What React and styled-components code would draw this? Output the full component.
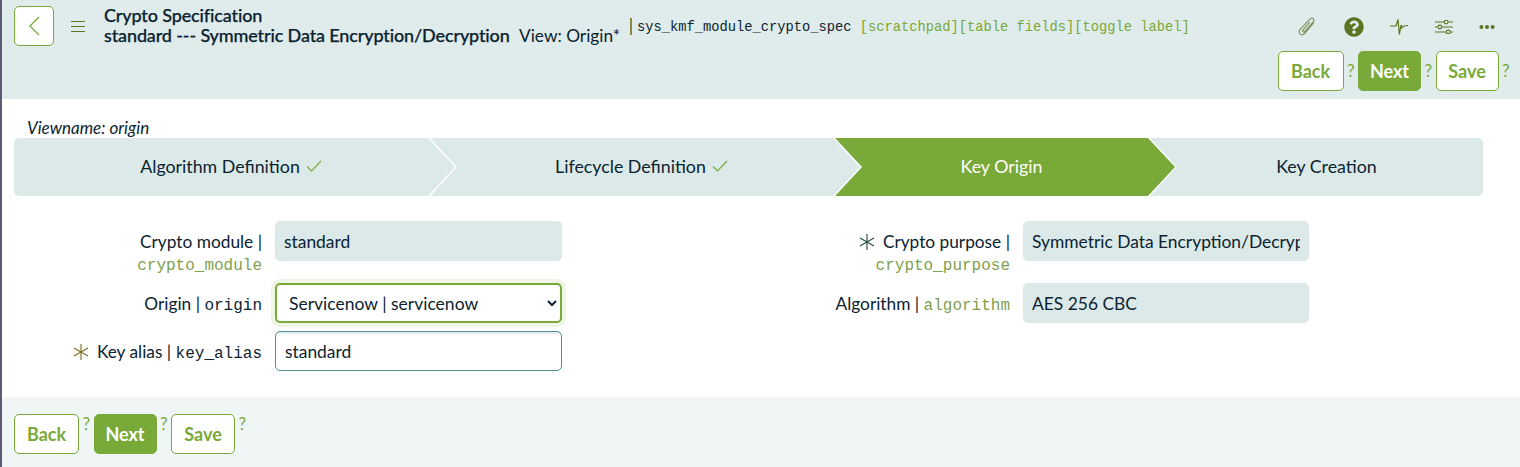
import React from "react";
import styled, { createGlobalStyle } from "styled-components";
import { FaQuestionCircle } from "react-icons/fa";

const sans = `Lato, "Open Sans", sans-serif`;
const mono = `"Liberation Mono", monospace`;
const green = "#79a938";
const darkGreen = "#5a7420";
const ink = "#0b2330";

const GlobalStyle = createGlobalStyle`
  html, body {
    margin: 0;
    padding: 0;
    background: #fff;
    color: ${ink};
    font-family: ${sans};
  }
  * { box-sizing: border-box; }
`;

const leftFields = [
  { label: "Crypto module", name: "crypto_module", value: "standard", wrap: true, tint: true },
  { label: "Origin", name: "origin", select: true, dark: true },
  { label: "Key alias", name: "key_alias", value: "standard", required: "#7d6a22", dark: true },
];

const rightFields = [
  {
    label: "Crypto purpose",
    name: "crypto_purpose",
    value: "Symmetric Data Encryption/Decryption",
    wrap: true,
    tint: true,
    required: "#1f4d3a",
  },
  { label: "Algorithm", name: "algorithm", value: "AES 256 CBC", tint: true },
];

const steps = [
  { label: "Algorithm Definition", done: true, width: 441 },
  { label: "Lifecycle Definition", done: true, width: 430 },
  { label: "Key Origin", active: true, width: 340 },
  { label: "Key Creation", last: true, width: 333 },
];

const PaperclipIcon = () => (
  <svg width="20" height="20" viewBox="0 0 20 20" fill="none" stroke="#7c9560" strokeWidth="1.2">
    <path d="M16.8 5.5 8 16c-1.4 1.7-3.4 2.2-4.8 1.1-1.4-1.1-1.3-3.2.1-4.9L12.6 2.3c1-1.2 2.5-1.5 3.5-.7 1 .9.9 2.3-.1 3.5L7.9 14.4c-.6.7-1.4.8-1.9.4-.5-.5-.4-1.2.1-1.9l6.7-7.7" />
  </svg>
);

const PulseIcon = () => (
  <svg width="18" height="16" viewBox="0 0 18 16" fill="none" stroke={darkGreen} strokeWidth="1.2">
    <path d="M0 7h6l2-6.5 1.4 15L11 6l1 3 1.3-1.8L18 6.5" />
  </svg>
);

const SlidersIcon = () => (
  <svg width="18" height="14" viewBox="0 0 18 14" fill="none" stroke={darkGreen} strokeWidth="1.1">
    <path d="M0 2h9M13.5 2H18M0 7h2.5M7 7h11M0 12h11M15.5 12H18" />
    <circle cx="11.2" cy="2" r="1.9" />
    <circle cx="4.8" cy="7" r="1.9" />
    <circle cx="13.3" cy="12" r="1.9" />
  </svg>
);

const DotsIcon = () => (
  <svg width="16" height="6" viewBox="0 0 16 6" fill={darkGreen}>
    <circle cx="2.4" cy="3" r="2" />
    <circle cx="8" cy="3" r="2" />
    <circle cx="13.6" cy="3" r="2" />
  </svg>
);

const MenuIcon = () => (
  <svg width="16" height="11" viewBox="0 0 16 11" fill="none" stroke={darkGreen} strokeWidth="1">
    <path d="M1 .5h14M1 5.5h14M1 10.5h14" />
  </svg>
);

const StarIcon = ({ color }) => (
  <RequiredMark width="16" height="16" viewBox="0 0 16 16" fill="none" stroke={color} strokeWidth="1.1">
    <path d="M8 0v16M1 4l14 8M15 4 1 12" />
  </RequiredMark>
);

const Actions = ({ widths, raised }) => (
  <ActionRow>
    {["Back", "Next", "Save"].map((name, i) => (
      <React.Fragment key={name}>
        <ActionButton $primary={name === "Next"} $width={widths[i]}>
          {name}
        </ActionButton>
        <Hint $raised={raised}>?</Hint>
      </React.Fragment>
    ))}
  </ActionRow>
);

const Field = ({ field, inputWidth }) => (
  <FieldRow>
    <FieldLabel>
      {field.required && <StarIcon color={field.required} />}
      {field.label}
      {field.wrap ? " |" : " | "}
      {field.wrap && <br />}
      <FieldName $dark={field.dark}>{field.name}</FieldName>
    </FieldLabel>
    {field.select ? (
      <FieldSelect defaultValue="servicenow">
        <option value="servicenow">Servicenow | servicenow</option>
      </FieldSelect>
    ) : (
      <FieldInput readOnly defaultValue={field.value} $tint={field.tint} $width={inputWidth} />
    )}
  </FieldRow>
);

export default function App() {
  return (
    <Page>
      <GlobalStyle />
      <Header>
        <TopRow>
          <BackSquare>
            <svg width="14" height="22" viewBox="0 0 14 22" fill="none" stroke={green} strokeWidth="1.3">
              <path d="M12 2 3 11l9 9" />
            </svg>
          </BackSquare>
          <MenuSlot>
            <MenuIcon />
          </MenuSlot>
          <Title>
            Crypto Specification
            <br />
            standard --- Symmetric Data Encryption/Decryption
          </Title>
          <ViewName>View: Origin*</ViewName>
          <TableInfo>
            sys_kmf_module_crypto_spec <InfoLinks>[scratchpad][table fields][toggle label]</InfoLinks>
          </TableInfo>
          <Tools>
            <PaperclipIcon />
            <HelpIcon />
            <PulseIcon />
            <SlidersIcon />
            <DotsIcon />
          </Tools>
        </TopRow>
        <HeaderActions>
          <Actions widths={[66, 63, 63]} />
        </HeaderActions>
      </Header>
      <Main>
        <ViewLabel>Viewname: origin</ViewLabel>
        <Stepper>
          {steps.map((step) => (
            <Step key={step.label} $active={step.active} $last={step.last} $width={step.width}>
              {step.label}
              {step.done && (
                <svg width="16" height="12" viewBox="0 0 16 12" fill="none" stroke={green} strokeWidth="1.1">
                  <path d="M1 6.5 5.5 11 15 1" />
                </svg>
              )}
            </Step>
          ))}
        </Stepper>
        <Form>
          <FieldColumn>
            {leftFields.map((field) => (
              <Field key={field.name} field={field} inputWidth={287} />
            ))}
          </FieldColumn>
          <FieldColumn>
            {rightFields.map((field) => (
              <Field key={field.name} field={field} inputWidth={286} />
            ))}
          </FieldColumn>
        </Form>
      </Main>
      <Footer>
        <Actions widths={[65, 63, 64]} raised />
      </Footer>
    </Page>
  );
}

const Page = styled.div`
  width: 1520px;
  height: 467px;
  overflow: hidden;
  border-left: 2px solid #5b5b73;
  display: flex;
  flex-direction: column;
`;

const Header = styled.header`
  height: 99px;
  background: #e0ebeb;
  padding: 6px 0 0 12px;
`;

const TopRow = styled.div`
  display: flex;
  align-items: flex-start;
  height: 45px;
`;

const BackSquare = styled.div`
  width: 40px;
  height: 40px;
  background: #fff;
  border: 1px solid ${green};
  border-radius: 5px;
  display: flex;
  align-items: center;
  justify-content: center;
`;

const MenuSlot = styled.div`
  display: flex;
  width: 50px;
  padding: 15px 0 0 16px;
`;

const Title = styled.div`
  font-size: 18px;
  font-weight: 500;
  line-height: 20px;
  letter-spacing: -0.13px;
  margin-top: -1px;
  width: 415px;
  white-space: nowrap;
  -webkit-text-stroke: 0.25px ${ink};
`;

const ViewName = styled.div`
  font-size: 17.3px;
  line-height: 20px;
  margin-top: 20px;
  width: 111px;
  white-space: nowrap;
`;

const TableInfo = styled.div`
  border-left: 2px solid #8a8a3a;
  margin-top: 12px;
  padding-left: 5px;
  height: 17px;
  font-family: ${mono};
  font-size: 13.75px;
  line-height: 19px;
  white-space: pre;
`;

const InfoLinks = styled.span`
  color: ${green};
`;

const Tools = styled.div`
  margin-left: auto;
  width: 223px;
  padding: 10px 25px 0 0;
  height: 32px;
  display: flex;
  align-items: center;
  justify-content: space-between;
`;

const HelpIcon = styled(FaQuestionCircle)`
  width: 20px;
  height: 20px;
  color: ${darkGreen};
`;

const HeaderActions = styled.div`
  display: flex;
  justify-content: flex-end;
  padding-right: 7px;
`;

const ActionRow = styled.div`
  display: flex;
  align-items: flex-start;
`;

const ActionButton = styled.button`
  width: ${(p) => p.$width}px;
  height: 40px;
  padding: 0;
  border: 1px solid ${green};
  border-radius: 5px;
  background: ${(p) => (p.$primary ? green : "#fff")};
  color: ${(p) => (p.$primary ? "#fff" : green)};
  font-family: ${sans};
  font-size: 18px;
  font-weight: 700;
`;

const Hint = styled.span`
  width: 14.5px;
  text-align: center;
  color: ${green};
  font-size: 17px;
  line-height: 20px;
  margin-top: ${(p) => (p.$raised ? "0" : "10px")};
`;

const Main = styled.main`
  flex: 1;
  padding: 18px 0 0 12px;
  background: #fff;
`;

const ViewLabel = styled.div`
  font-style: italic;
  font-size: 17px;
  line-height: 21px;
  padding-left: 13px;
`;

const Stepper = styled.div`
  display: flex;
  width: 1469px;
  height: 58px;
  border-radius: 5px;
  overflow: hidden;
`;

const Step = styled.div`
  flex: 0 0 ${(p) => p.$width}px;
  margin-left: -25px;
  padding: 0 ${(p) => (p.$last ? "0" : "27px")} 2px 20px;
  display: flex;
  align-items: center;
  justify-content: center;
  gap: 6px;
  font-size: 17.8px;
  background: ${(p) => (p.$active ? green : "#dbe9e9")};
  color: ${(p) => (p.$active ? "#fff" : ink)};
  clip-path: ${(p) =>
    p.$last
      ? "polygon(0 0, 100% 0, 100% 100%, 0 100%, 27px 50%)"
      : "polygon(0 0, calc(100% - 27px) 0, 100% 50%, calc(100% - 27px) 100%, 0 100%, 27px 50%)"};

  &:first-child {
    margin-left: 0;
    clip-path: polygon(0 0, calc(100% - 27px) 0, 100% 50%, calc(100% - 27px) 100%, 0 100%);
  }
`;

const Form = styled.div`
  display: grid;
  grid-template-columns: 748px 300px;
  padding: 25px 0 0 48px;
`;

const FieldColumn = styled.div`
  display: flex;
  flex-direction: column;
  gap: 8px;
`;

const FieldRow = styled.div`
  display: grid;
  grid-template-columns: 200px 287px;
  column-gap: 13px;
  align-items: start;
  min-height: 40px;
`;

const FieldLabel = styled.label`
  text-align: right;
  padding-top: 10px;
  font-size: 17.3px;
  line-height: 22px;
  white-space: nowrap;
`;

const RequiredMark = styled.svg`
  vertical-align: -2px;
  margin-right: 8px;
`;

const FieldName = styled.span`
  font-family: ${mono};
  font-size: 16px;
  line-height: 16px;
  color: ${(p) => (p.$dark ? ink : "#7f9f50")};
`;

const FieldInput = styled.input`
  width: ${(p) => p.$width}px;
  height: 40px;
  padding: 0 9px;
  border-radius: 5px;
  border: ${(p) => (p.$tint ? "none" : "1px solid #4f9090")};
  background: ${(p) => (p.$tint ? "#dbe9e9" : "#fff")};
  box-shadow: ${(p) => (p.$tint ? "none" : "inset 0 3px 2px -1px #e3e8e8")};
  color: ${ink};
  font-family: ${sans};
  font-size: 17.4px;
  outline: none;
`;

const FieldSelect = styled.select`
  width: 287px;
  height: 40px;
  padding: 0 8px;
  border: 2px solid ${green};
  border-radius: 5px;
  box-shadow: 0 0 0 4px #eef4e6;
  background: #fff;
  color: ${ink};
  font-family: ${sans};
  font-size: 17.5px;
  outline: none;
`;

const Footer = styled.footer`
  height: 70px;
  background: #f0f6f6;
  padding: 17px 0 0 12px;
`;
